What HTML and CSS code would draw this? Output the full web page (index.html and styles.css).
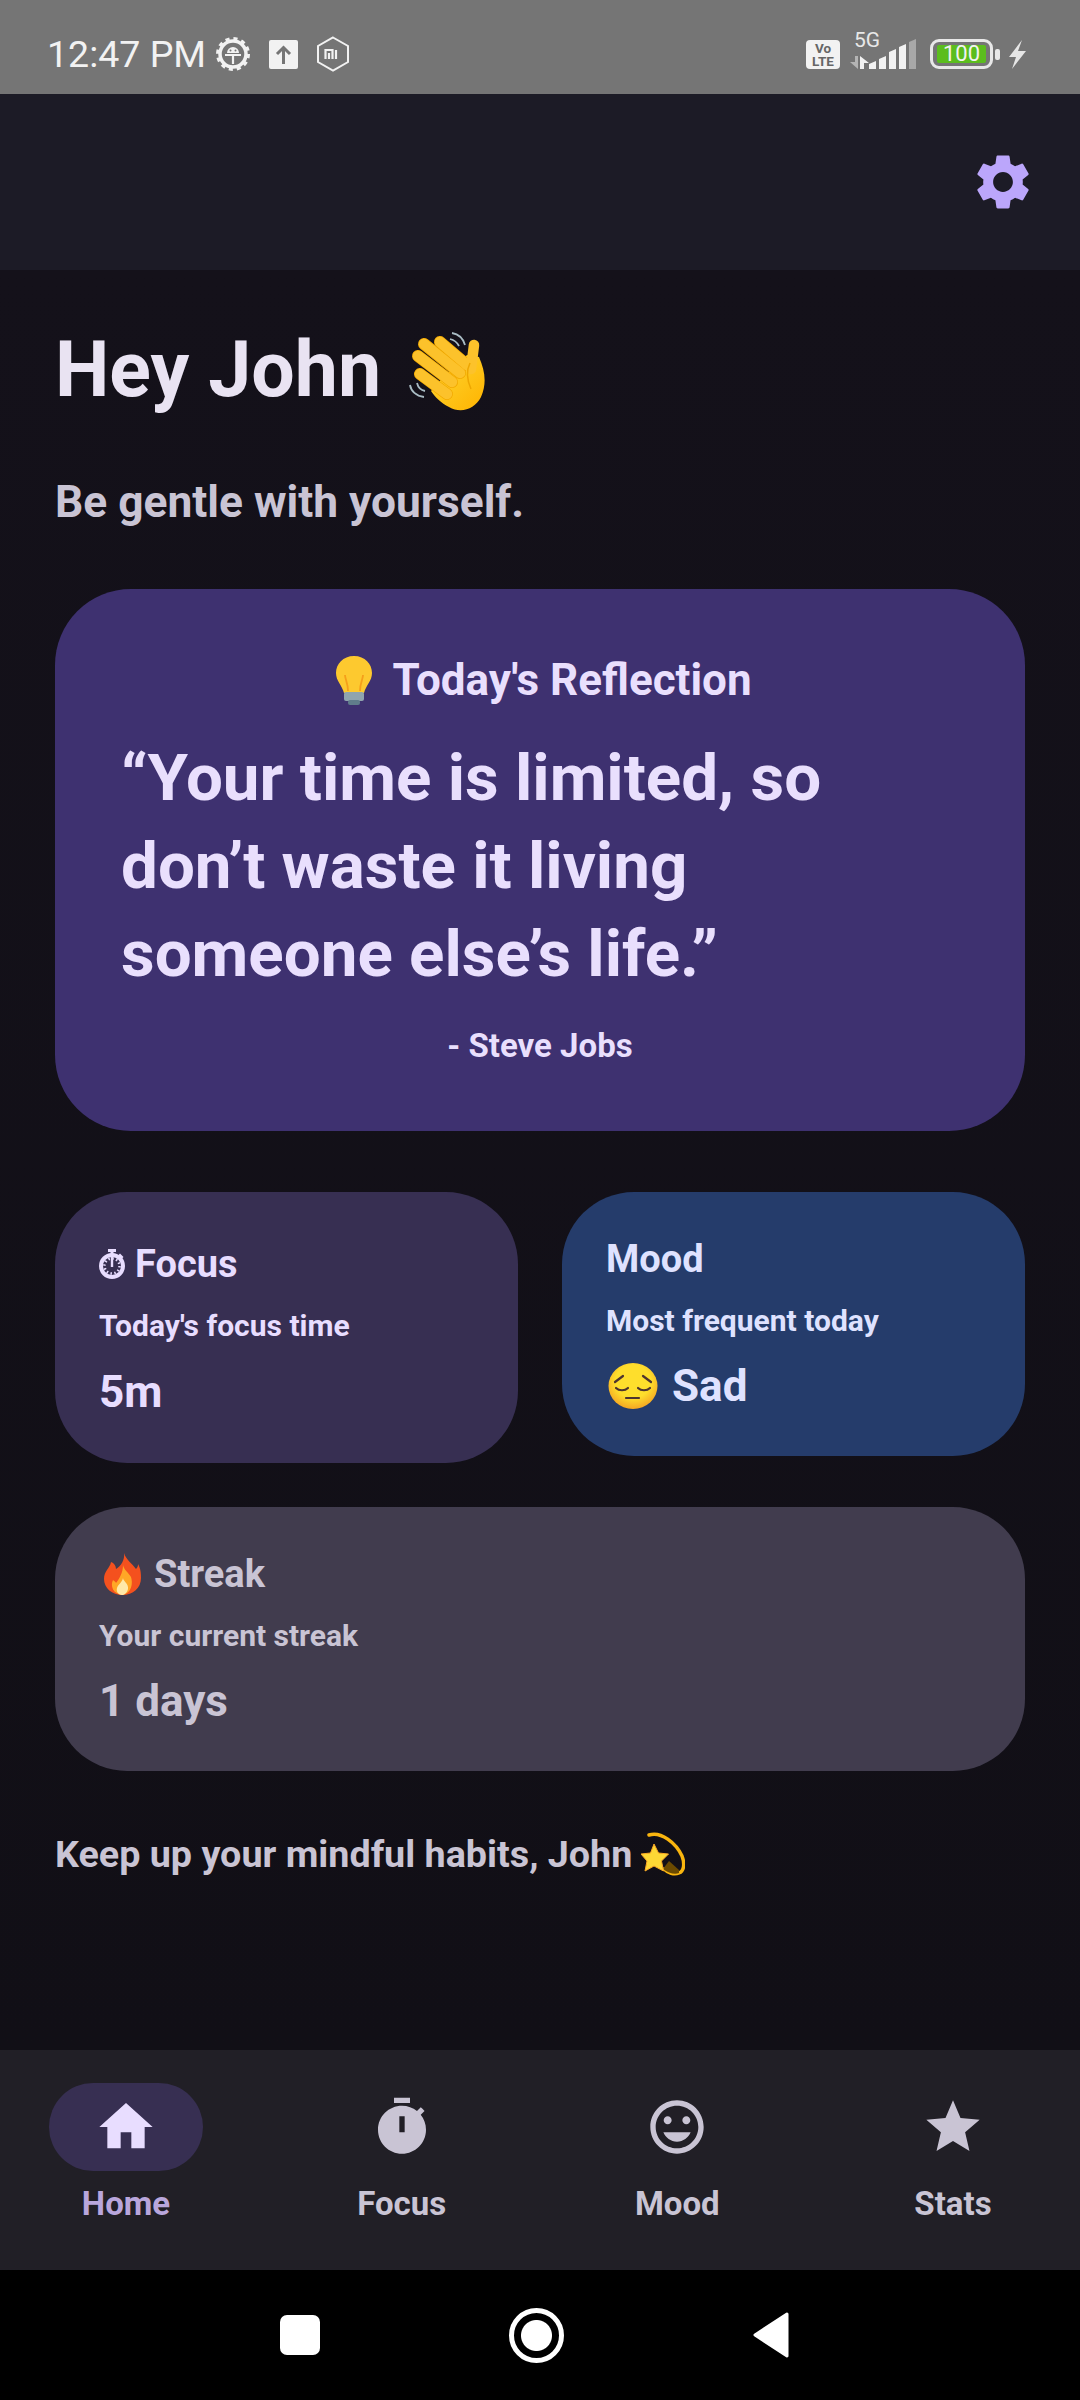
FILE: index.html
```html
<!DOCTYPE html>
<html lang="en">
<head>
    <meta charset="UTF-8">
    <title>Home</title>
    <link rel="stylesheet" href="styles.css">
</head>
<body>
<div class="status-bar">
    <span class="clock">12:47 PM</span>
    <svg class="st-gear" viewBox="0 0 34 34">
        <circle cx="17" cy="17" r="13" fill="none" stroke="#f2f2f2" stroke-width="3.500"/>
        <circle cx="17" cy="17" r="15" fill="none" stroke="#f2f2f2" stroke-width="4" stroke-dasharray="4 3.850"/>
        <path d="M9 18h16M17 18v9" stroke="#f2f2f2" stroke-width="2.200"/>
        <path d="M11 16a6 6 0 0 1 12 0z" fill="#f2f2f2"/>
        <circle cx="14.500" cy="13.500" r="1" fill="#757575"/>
        <circle cx="19.500" cy="13.500" r="1" fill="#757575"/>
    </svg>
    <svg class="st-up" viewBox="0 0 29 29">
        <rect width="29" height="29" rx="2" fill="#f2f2f2"/>
        <path d="M14.500 24V8M8 14l6.500-6.500L21 14" fill="none" stroke="#757575" stroke-width="3"/>
    </svg>
    <svg class="st-mi" viewBox="0 0 34 36">
        <path d="M17 1.500l15 8.500v16l-15 8.500L2 26V10z" fill="none" stroke="#f2f2f2" stroke-width="2"/>
        <path d="M9.500 23v-9h7v9M13 17v6M20 14v9" fill="none" stroke="#f2f2f2" stroke-width="2.200"/>
    </svg>
    <div class="status-right">
        <svg class="st-volte" viewBox="0 0 34 29">
            <rect width="34" height="29" rx="4" fill="#f2f2f2"/>
            <text x="17" y="13" class="volte-text">Vo</text>
            <text x="17" y="26" class="volte-text">LTE</text>
        </svg>
        <div class="signal">
            <span class="five-g">5G</span>
            <svg class="st-bars" viewBox="0 0 68 30">
                <path d="M5 17h3v13l-8-7h5z" fill="#b4b4b4"/>
                <path d="M10 30V17l9 7h-5v6z" fill="#f2f2f2"/>
                <path d="M19 25l7-3v8h-7zM29 20l7-3v13h-7zM39 13l7-3v20h-7zM49 8l7-3v25h-7z" fill="#f2f2f2"/>
                <path d="M59 3l7-3v30h-7z" fill="#a8a8a8"/>
            </svg>
        </div>
        <div class="battery"><span class="battery-fill">100</span></div>
        <span class="battery-nub"></span>
        <svg class="st-bolt" viewBox="0 0 20 29"><path d="M15 0L2 17h7l-4 12 14-18h-8z" fill="#e6e6e6"/></svg>
    </div>
</div>

<header class="app-bar">
    <svg class="settings" viewBox="0 0 24 24"><path d="M19.140,12.940c0.040-0.300,0.060-0.610,0.060-0.940c0-0.320-0.020-0.640-0.070-0.940l2.030-1.580c0.180-0.140,0.230-0.410,0.120-0.610l-1.920-3.320c-0.120-0.220-0.370-0.290-0.590-0.220l-2.390,0.960c-0.500-0.380-1.030-0.700-1.620-0.940L14.400,2.810c-0.040-0.240-0.240-0.410-0.480-0.410h-3.840c-0.240,0-0.430,0.170-0.470,0.410L9.250,5.350C8.660,5.590,8.120,5.920,7.630,6.290L5.240,5.330c-0.220-0.080-0.470,0-0.590,0.220L2.740,8.870C2.620,9.080,2.660,9.340,2.860,9.480l2.030,1.580C4.840,11.360,4.800,11.690,4.800,12s0.020,0.640,0.070,0.940l-2.030,1.580c-0.180,0.140-0.230,0.410-0.120,0.610l1.920,3.320c0.120,0.220,0.370,0.290,0.590,0.220l2.390-0.960c0.500,0.380,1.030,0.700,1.620,0.940l0.360,2.540c0.050,0.240,0.240,0.410,0.480,0.410h3.840c0.240,0,0.440-0.170,0.470-0.410l0.360-2.540c0.590-0.240,1.130-0.560,1.620-0.940l2.390,0.960c0.220,0.080,0.470,0,0.590-0.220l1.920-3.320c0.120-0.220,0.070-0.470-0.120-0.610L19.140,12.940z M12,15.600c-1.980,0-3.600-1.620-3.600-3.600s1.620-3.600,3.600-3.600s3.600,1.620,3.600,3.600S13.980,15.600,12,15.600z"/></svg>
</header>

<main class="content">
    <h1 class="greeting">Hey John
        <svg class="emoji-wave" viewBox="0 0 80 80">
            <defs>
                <linearGradient id="hand" x1="0" y1="0" x2="1" y2="1">
                    <stop offset="0" stop-color="#fdd835"/>
                    <stop offset="1" stop-color="#ffb300"/>
                </linearGradient>
            </defs>
            <path d="M43 2c6 1 11 5 13 12M41 8c4 1 7 3 9 7M1 54c1 6 6 11 14 12M8 52c1 4 3 7 8 8" fill="none" stroke="#a9bcc4" stroke-width="1.800"/>
            <path d="M36 44L58 24L70 26C76 40 78 52 72 66C66 78 52 83 40 76C32 72 26 66 22 60z" fill="url(#hand)"/>
            <g fill="none" stroke="#f2a900" stroke-width="12" stroke-linecap="round">
                <path d="M11 43L38 63"/>
                <path d="M9 25L43 51"/>
                <path d="M15 13L51 42"/>
                <path d="M31 11L58 34"/>
            </g>
            <g fill="none" stroke="#fcc22b" stroke-width="10.500" stroke-linecap="round">
                <path d="M11 43L38 63"/>
                <path d="M9 25L43 51"/>
                <path d="M15 13L51 42"/>
                <path d="M31 11L58 34"/>
                <path d="M65 14L62 38"/>
            </g>
            <path d="M61 32c-4 8-3 17 1 26" fill="none" stroke="#eda600" stroke-width="1.500"/>
        </svg>
    </h1>
    <p class="tagline">Be gentle with yourself.</p>

    <section class="reflection">
        <h2 class="reflection-title">
            <svg class="emoji-bulb" viewBox="0 0 40 50">
                <path d="M20 1C9 1 2 9 2 18c0 8 6 12 8 20h20c2-8 8-12 8-20C38 9 31 1 20 1z" fill="#fdc92f"/>
                <path d="M14 36c0-8-3-12-3-16M26 36c0-8 3-12 3-16" fill="none" stroke="#f59f1a" stroke-width="1.800"/>
                <rect x="10" y="37" width="20" height="9" rx="2" fill="#90a4ae"/>
                <rect x="14" y="45" width="12" height="5" rx="2" fill="#607d8b"/>
            </svg>
            Today's Reflection
        </h2>
        <p class="quote">“Your time is limited, so don’t waste it living someone else’s life.”</p>
        <p class="quote-author">- Steve Jobs</p>
    </section>

    <div class="card-row">
        <section class="stat-card focus-card">
            <h3 class="stat-title">
                <svg class="glyph-watch" viewBox="0 0 26 30">
                    <path d="M9 0h8v3h-2.500v3h-3V3H9zM21 4.500l3.500 3.500-2.500 2.500L18.500 7z" fill="#e8ddff"/>
                    <circle cx="13" cy="17" r="11" fill="none" stroke="#e8ddff" stroke-width="4"/>
                    <circle cx="13" cy="17" r="7.500" fill="none" stroke="#e8ddff" stroke-width="2.500" stroke-dasharray="1.500 2.430"/>
                    <path d="M13 8v10" stroke="#e8ddff" stroke-width="2.400"/>
                </svg>
                Focus
            </h3>
            <p class="stat-label">Today's focus time</p>
            <p class="stat-value">5m</p>
        </section>
        <section class="stat-card mood-card">
            <h3 class="stat-title">Mood</h3>
            <p class="stat-label">Most frequent today</p>
            <p class="stat-value">
                <svg class="emoji-sad" viewBox="0 0 50 46">
                    <defs>
                        <radialGradient id="face" cx="0.5" cy="0.4" r="0.6">
                            <stop offset="0.6" stop-color="#fede2c"/>
                            <stop offset="1" stop-color="#f5a623"/>
                        </radialGradient>
                    </defs>
                    <ellipse cx="25" cy="23" rx="24.500" ry="23" fill="url(#face)"/>
                    <path d="M7 19l8-6M43 19l-8-6M8 25c3 3 9 3 12 0M30 25c3 3 9 3 12 0M18 35h13" fill="none" stroke="#4e342e" stroke-width="2.200" stroke-linecap="round"/>
                </svg>
                Sad
            </p>
        </section>
    </div>

    <section class="stat-card streak-card">
        <h3 class="stat-title">
            <svg class="emoji-fire" viewBox="0 0 37 42">
                <path d="M20 0c2 7 8 10 12 16 2-2 2-4 2-5 3 5 3 11 3 14 0 10-8 17-18.500 17S0 35 0 26c0-8 6-11 7-17 3 1 5 4 5 7 5-3 9-9 8-16z" fill="#f4511e"/>
                <path d="M19 12c1 5 5 7 8 12 2 6 1 16-8.500 18C9 41 6 33 9 27c1 1 3 2 3 3 3-4 7-10 7-18z" fill="#ffa726"/>
                <path d="M19 25c0 3 6 6 5 11-1 4-4 6-6 6-4 0-6-4-5-7 1-4 5-5 6-10z" fill="#ffe9a8"/>
            </svg>
            Streak
        </h3>
        <p class="stat-label">Your current streak</p>
        <p class="stat-value">1 days</p>
    </section>

    <p class="footer-note">Keep up your mindful habits, John
        <svg class="emoji-dizzy" viewBox="0 0 44 44">
            <path d="M8 3c12-4 27 8 33 21 3 8 2 15-3 17-5 2-11 0-15-4" fill="none" stroke="#f9b50f" stroke-width="3.500" stroke-linecap="round"/>
            <path d="M38 41c-4 2-11 0-16-4l6-8 10 9z" fill="#6b4a00"/>
            <path d="M13 12l4.500 9 10 1-7 7 2 10-9.500-5-9 5 2-10-6-7 9.500-1z" fill="#fdd835" stroke="#f9a825"/>
        </svg>
    </p>
</main>

<nav class="bottom-nav">
    <div class="nav-item active">
        <span class="nav-pill"><svg class="nav-icon" viewBox="0 0 24 24"><path d="M10 20v-6h4v6h5v-8h3L12 3 2 12h3v8z"/></svg></span>
        <span class="nav-label">Home</span>
    </div>
    <div class="nav-item">
        <span class="nav-pill"><svg class="nav-icon" viewBox="0 0 24 24"><path fill-rule="evenodd" d="M15 1H9v2h6V1zm-4 13h2V8h-2v6zm8.030-6.610l1.420-1.420c-.430-.510-.900-.990-1.410-1.410l-1.420 1.420C16.070 4.740 14.120 4 12 4c-4.970 0-9 4.030-9 9s4.020 9 9 9 9-4.030 9-9c0-2.120-.740-4.070-1.970-5.610z"/></svg></span>
        <span class="nav-label">Focus</span>
    </div>
    <div class="nav-item">
        <span class="nav-pill"><svg class="nav-icon" viewBox="0 0 24 24"><path d="M11.990 2C6.470 2 2 6.480 2 12s4.470 10 9.990 10C17.520 22 22 17.520 22 12S17.520 2 11.990 2zM12 20c-4.420 0-8-3.580-8-8s3.580-8 8-8 8 3.580 8 8-3.580 8-8 8zm3.500-9c.830 0 1.500-.670 1.500-1.500S16.330 8 15.500 8 14 8.670 14 9.500s.670 1.500 1.500 1.500zm-7 0c.830 0 1.500-.670 1.500-1.500S9.330 8 8.500 8 7 8.670 7 9.500 7.670 11 8.500 11zm3.500 6.500c2.330 0 4.310-1.460 5.110-3.500H6.890c.800 2.040 2.780 3.500 5.110 3.500z"/></svg></span>
        <span class="nav-label">Mood</span>
    </div>
    <div class="nav-item">
        <span class="nav-pill"><svg class="nav-icon" viewBox="0 0 24 24"><path d="M12 17.270L18.180 21l-1.640-7.030L22 9.240l-7.190-.610L12 2 9.190 8.630 2 9.240l5.460 4.730L5.820 21z"/></svg></span>
        <span class="nav-label">Stats</span>
    </div>
</nav>

<div class="system-nav">
    <span class="sys-square"></span>
    <span class="sys-circle"></span>
    <svg class="sys-back" viewBox="0 0 37 46"><path d="M34 2L2 23l32 21z" fill="#fff" stroke="#fff" stroke-width="3" stroke-linejoin="round"/></svg>
</div>
</body>
</html>
```

FILE: styles.css
```css
body {
    margin: 0;
    width: 1080px;
    height: 2400px;
    display: flex;
    flex-direction: column;
    overflow: hidden;
    background: #131118;
    color: #e6e0e9;
    font-family: Roboto, "Noto Sans", sans-serif;
}
h1, h2, h3, p {
    margin: 0;
}

/* status bar */
.status-bar {
    height: 94px;
    flex: none;
    display: flex;
    align-items: center;
    padding: 14px 53px 0 47px;
    box-sizing: border-box;
    background: #757575;
    color: #f2f2f2;
}
.clock {
    font-size: 37.5px;
}
.st-gear {
    width: 34px;
    height: 34px;
    margin-left: 10px;
}
.st-up {
    width: 29px;
    height: 29px;
    margin-left: 19px;
}
.st-mi {
    width: 34px;
    height: 36px;
    margin-left: 18px;
}
.status-right {
    margin-left: auto;
    display: flex;
    align-items: center;
}
.st-volte {
    width: 34px;
    height: 29px;
}
.volte-text {
    font-size: 13.5px;
    font-weight: 700;
    text-anchor: middle;
    fill: #666;
}
.signal {
    position: relative;
    width: 68px;
    height: 30px;
    margin-left: 10px;
}
.five-g {
    position: absolute;
    left: 4px;
    top: -11px;
    font-size: 21px;
    line-height: 24px;
    color: #e8e8e8;
}
.st-bars {
    width: 68px;
    height: 30px;
    display: block;
}
.battery {
    width: 63px;
    height: 30px;
    margin-left: 12px;
    box-sizing: border-box;
    border: 3px solid #e8e8e8;
    border-radius: 9px;
    padding: 3px 4px;
}
.battery-fill {
    display: block;
    height: 18px;
    background: #5bbd1e;
    border-radius: 2px;
    color: #f2f2f2;
    font-size: 22px;
    line-height: 18px;
    text-align: center;
}
.battery-nub {
    width: 5px;
    height: 11px;
    margin-left: 2px;
    border-radius: 2px;
    background: #e8e8e8;
}
.st-bolt {
    width: 20px;
    height: 29px;
    margin-left: 7px;
}

/* top bar */
.app-bar {
    height: 176px;
    flex: none;
    display: flex;
    justify-content: flex-end;
    align-items: center;
    padding-right: 44px;
    box-sizing: border-box;
    background: #1c1b26;
}
.settings {
    width: 66px;
    height: 66px;
    fill: #bba6fb;
}

/* main content */
.content {
    flex: 1;
    padding: 0 55px;
    background: linear-gradient(#14111a, #110f16);
}
.greeting {
    margin-top: 54px;
    font-size: 77px;
    line-height: 92px;
    font-weight: 700;
    color: #e9e3f2;
    display: flex;
    align-items: center;
    gap: 28px;
}
.emoji-wave {
    width: 80px;
    height: 80px;
    margin-top: 1px;
}
.tagline {
    margin-top: 60px;
    font-size: 44.3px;
    line-height: 52px;
    font-weight: 700;
    color: #c9c4d4;
}
.reflection {
    margin-top: 61px;
    height: 542px;
    box-sizing: border-box;
    padding: 62px 90px 0 66px;
    background: #3e3170;
    border-radius: 76px;
    color: #e9dffd;
}
.reflection-title {
    display: flex;
    justify-content: center;
    align-items: center;
    gap: 18px;
    margin-right: -30px;
    font-size: 44px;
    line-height: 58px;
    font-weight: 700;
}
.emoji-bulb {
    width: 40px;
    height: 50px;
}
.quote {
    margin-top: 25px;
    font-size: 65.5px;
    line-height: 88px;
    font-weight: 700;
}
.quote-author {
    margin-top: 26px;
    margin-right: -24px;
    font-size: 33px;
    line-height: 44px;
    font-weight: 700;
    text-align: center;
}
.card-row {
    margin-top: 61px;
    display: flex;
    align-items: flex-start;
    gap: 44px;
}
.stat-card {
    box-sizing: border-box;
    height: 264px;
    padding: 45px 44px 0;
    border-radius: 72px;
}
.focus-card {
    flex: 1;
    height: 271px;
    padding-top: 50px;
    background: #372f52;
    color: #e8ddff;
}
.mood-card {
    flex: 1;
    background: #253c6b;
    color: #dfe2ff;
}
.streak-card {
    margin-top: 44px;
    background: #413c4e;
    color: #c9c4d4;
}
.stat-title {
    display: flex;
    align-items: center;
    gap: 10px;
    font-size: 38px;
    line-height: 44px;
    font-weight: 700;
}
.glyph-watch {
    width: 26px;
    height: 30px;
}
.emoji-fire {
    width: 37px;
    height: 42px;
    margin: 0 3px 0 5px;
}
.stat-label {
    margin-top: 21px;
    font-size: 30px;
    line-height: 38px;
    font-weight: 700;
}
.stat-value {
    margin-top: 20px;
    display: flex;
    align-items: center;
    gap: 14px;
    font-size: 44px;
    line-height: 52px;
    font-weight: 700;
}
.focus-card .stat-value {
    margin-top: 21px;
}
.emoji-sad {
    width: 50px;
    height: 46px;
    margin-left: 2px;
}
.footer-note {
    margin-top: 59px;
    display: flex;
    align-items: center;
    gap: 9px;
    font-size: 37.7px;
    line-height: 48px;
    font-weight: 700;
    color: #c9c4d4;
}
.emoji-dizzy {
    width: 44px;
    height: 44px;
}

/* bottom navigation */
.bottom-nav {
    height: 220px;
    flex: none;
    display: flex;
    justify-content: space-between;
    padding: 33px 50px 0 49px;
    box-sizing: border-box;
    background: #211f26;
}
.nav-item {
    width: 154px;
    display: flex;
    flex-direction: column;
    align-items: center;
    color: #c9c4d4;
}
.nav-pill {
    width: 154px;
    height: 88px;
    border-radius: 44px;
    display: flex;
    align-items: center;
    justify-content: center;
}
.nav-icon {
    width: 64px;
    height: 64px;
    fill: #c9c4d4;
}
.nav-label {
    margin-top: 13px;
    font-size: 33px;
    line-height: 40px;
    font-weight: 700;
}
.active .nav-pill {
    background: #372f52;
}
.active .nav-icon {
    fill: #e8ddff;
}
.active .nav-label {
    color: #b9a6dc;
}

/* android nav */
.system-nav {
    height: 130px;
    flex: none;
    display: flex;
    justify-content: center;
    align-items: center;
    gap: 189px;
    padding-right: 10px;
    background: #000;
}
.sys-square {
    width: 40px;
    height: 40px;
    border-radius: 7px;
    background: #fff;
}
.sys-circle {
    width: 55px;
    height: 55px;
    box-sizing: border-box;
    border: 5px solid #fff;
    border-radius: 50%;
    background: radial-gradient(circle, #fff 0 15px, #000 16px);
}
.sys-back {
    width: 37px;
    height: 46px;
}
```
